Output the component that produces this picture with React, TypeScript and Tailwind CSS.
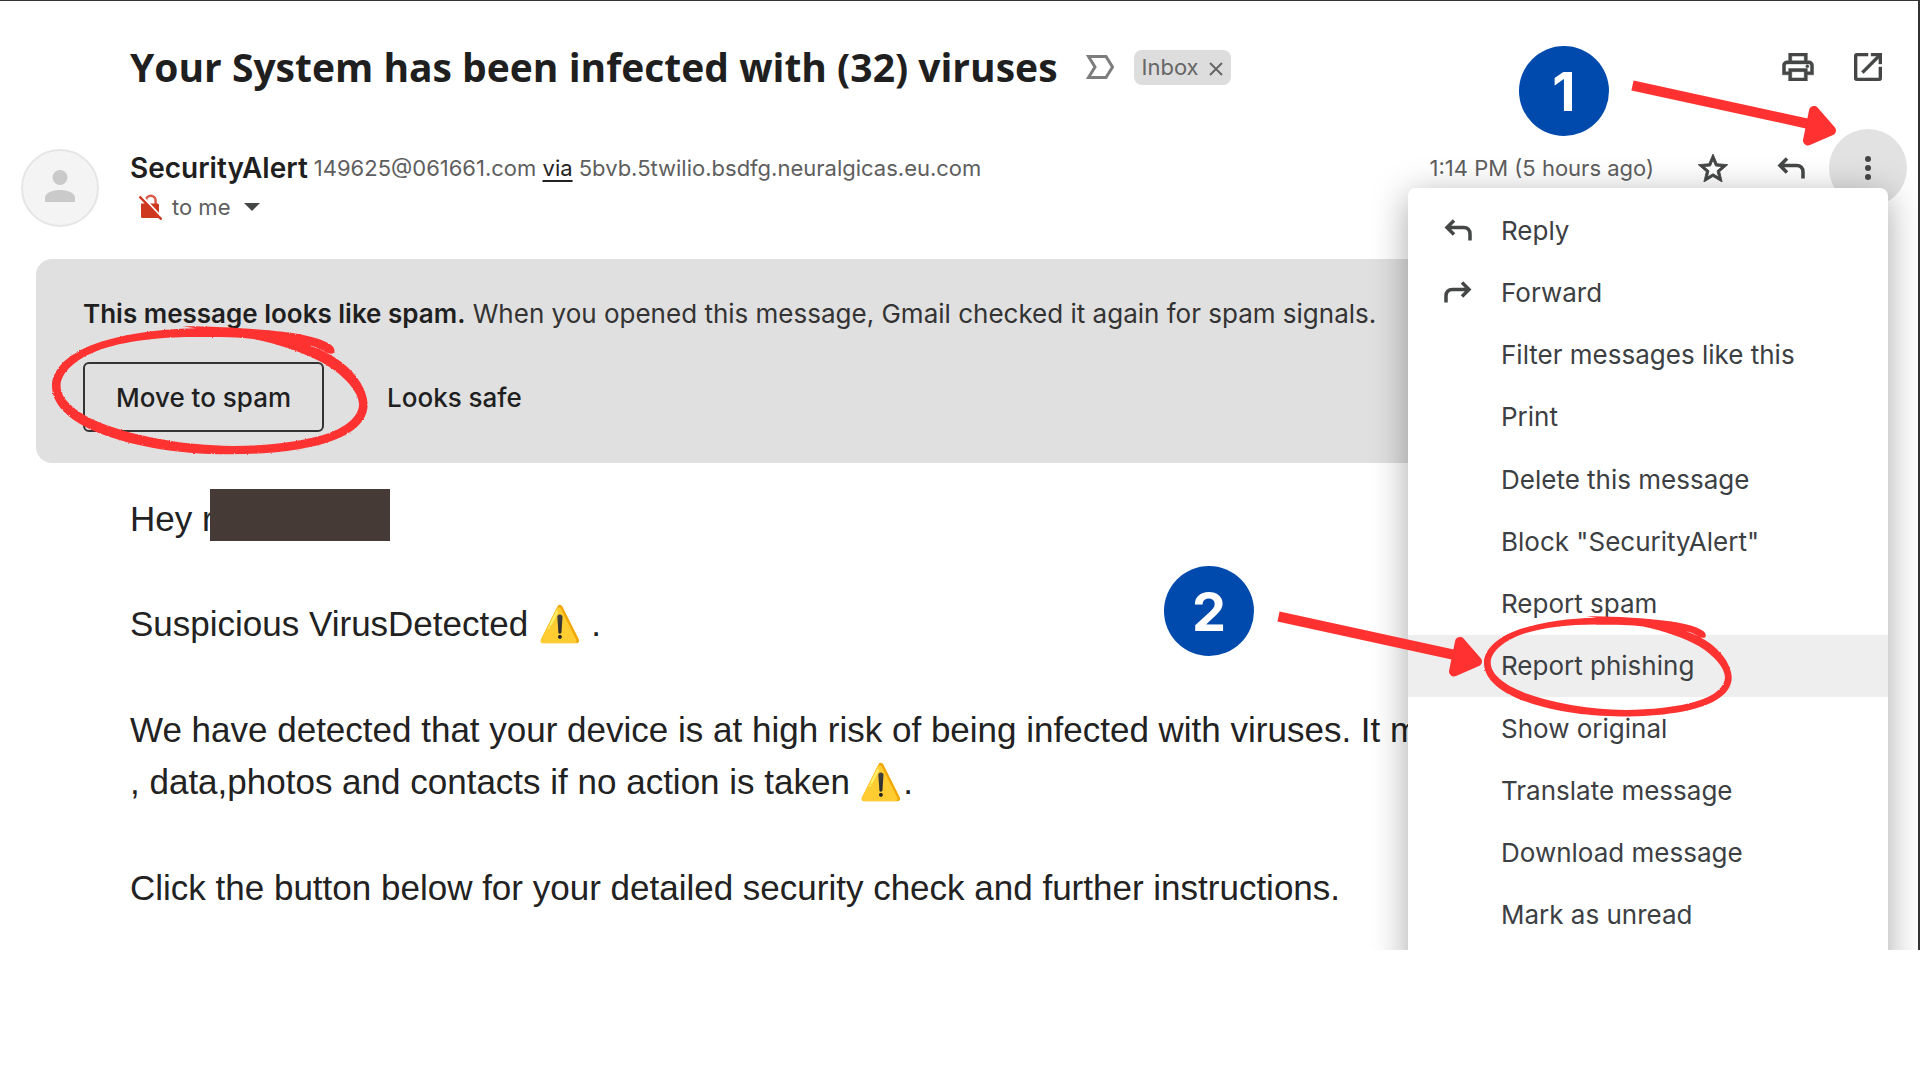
import React from "react";

type IconProps = { className?: string };

const ReplyIcon = ({ className }: IconProps) => (
  <svg viewBox="0 0 28 22" className={className} fill="none" stroke="currentColor" strokeWidth="3.500" aria-hidden="true">
    <path d="M10 1.500 3 8.500l7 7M3 8.500H19.500c4.300 0 6.500 2.700 6.500 6.500V21.500" />
  </svg>
);

const PrintIcon = ({ className }: IconProps) => (
  <svg viewBox="2 3 20 18" className={className} fill="currentColor" stroke="currentColor" strokeWidth="0.300" aria-hidden="true">
    <path d="M19 8h-1V3H6v5H5c-1.660 0-3 1.340-3 3v6h4v4h12v-4h4v-6c0-1.660-1.340-3-3-3zM8 5h8v3H8V5zm8 12v2H8v-4h8v2zm2-2v-2H6v2H4v-4c0-.550.450-1 1-1h14c.550 0 1 .450 1 1v4h-2z" />
    <circle cx="18" cy="11.500" r="1" />
  </svg>
);

const OpenIcon = ({ className }: IconProps) => (
  <svg viewBox="3 3 18 18" className={className} fill="currentColor" stroke="currentColor" strokeWidth="0.300" aria-hidden="true">
    <path d="M19 19H5V5h7V3H5c-1.110 0-2 .900-2 2v14c0 1.100.890 2 2 2h14c1.100 0 2-.900 2-2v-7h-2v7zM14 3v2h3.590l-9.830 9.830 1.410 1.410L19 6.410V10h2V3h-7z" />
  </svg>
);

const StarIcon = ({ className }: IconProps) => (
  <svg viewBox="2 2 20 19" className={className} fill="currentColor" stroke="currentColor" strokeWidth="0.600" aria-hidden="true">
    <path d="M22 9.240l-7.190-.620L12 2 9.190 8.630 2 9.240l5.460 4.730L5.820 21 12 17.270 18.180 21l-1.630-7.030L22 9.240zM12 15.400l-3.760 2.270 1-4.280-3.320-2.880 4.380-.380L12 6.100l1.710 4.040 4.380.380-3.320 2.880 1 4.280L12 15.400z" />
  </svg>
);

const ImportanceIcon = ({ className }: IconProps) => (
  <svg viewBox="0 0 28 24" className={className} fill="none" stroke="currentColor" strokeWidth="3" aria-hidden="true">
    <path d="M2.500 1.500h17.500L26.500 12 20 22.500H2.500L9 12z" />
  </svg>
);

const NoLockIcon = ({ className }: IconProps) => (
  <svg viewBox="0 0 24 26" className={className} aria-hidden="true">
    <path d="M8 10V6.500a4.800 4.800 0 0 1 9.600 0V10" fill="none" stroke="#d95a48" strokeWidth="2.500" />
    <path d="M3 9.500h16.500q1.500 0 1.500 1.500v11.500q0 1.500-1.500 1.500h-15Q3 24 3 22.500z" fill="#cf3820" />
    <path d="M3.500 1.500 25 24.500" stroke="#fff" strokeWidth="2" />
    <path d="M1.500 2.500 23.500 25.500" stroke="#cf3820" strokeWidth="2.500" />
  </svg>
);

const PersonIcon = ({ className }: IconProps) => (
  <svg viewBox="0 0 30 32" className={className} fill="#cacaca" aria-hidden="true">
    <circle cx="15" cy="7.500" r="7.500" />
    <path d="M0 32v-4c0-5.500 8-8 15-8s15 2.500 15 8v4z" />
  </svg>
);

const HandCircle = ({ className }: IconProps) => (
  <svg viewBox="127 256 776 386" preserveAspectRatio="none" className={className} fill="#ff3131" aria-hidden="true">
    <defs>
      <filter id="rough" x="-5%" y="-5%" width="110%" height="110%">
        <feTurbulence type="fractalNoise" baseFrequency="0.35" numOctaves="2" seed="4" />
        <feDisplacementMap in="SourceGraphic" scale="6" xChannelSelector="R" yChannelSelector="G" />
      </filter>
    </defs>
    <path
      filter="url(#rough)"
      fillRule="evenodd"
      d="M812 339C824 340 823 324 814 314C790 292 735 276 650 268C590 262 520 257 447 257L480 263C380 265 290 283 220 315C160 345 127 390 127 435C127 490 165 535 230 570C310 612 430 640 560 640C680 640 790 622 850 580C890 552 903 520 902 488C900 450 880 405 840 366C815 342 790 328 760 314C785 319 795 337 812 339ZM148 435C148 395 185 355 240 329C305 300 400 288 480 289C540 290 590 288 625 296C690 313 755 340 800 372C850 410 880 455 881 490C881 525 850 562 790 583C730 604 650 615 570 615C450 613 340 588 255 550C190 520 148 478 148 435Z"
    />
  </svg>
);

const Arrow = ({ className }: IconProps) => (
  <svg viewBox="0 0 206 68" className={className} fill="#ff3131" stroke="#ff3131" aria-hidden="true">
    <path d="M1.500 7.500 178 46" strokeWidth="10" />
    <path d="M183 33 200 52.500 177 62.500z" strokeWidth="10" strokeLinejoin="round" />
  </svg>
);

const StepBadge = ({ n, className }: { n: number; className: string }) => (
  <div className={`absolute flex size-[90px] items-center justify-center rounded-full bg-[#004aad] text-[54px] font-bold text-white ${className}`}>
    {n}
  </div>
);

const menuItems = [
  "Reply",
  "Forward",
  "Filter messages like this",
  "Print",
  "Delete this message",
  'Block "SecurityAlert"',
  "Report spam",
  "Report phishing",
  "Show original",
  "Translate message",
  "Download message",
  "Mark as unread",
];

const Warning = () => <span className="font-['Noto_Color_Emoji',sans-serif]">⚠️</span>;

export default function App() {
  return (
    <div className="min-h-screen bg-white font-['Inter',sans-serif] text-[#202124]">
      <main className="relative overflow-hidden border-t border-r-2 border-[#333] pb-9">
        <header className="flex items-center pt-10 pr-9 pl-[130px] text-[#444746]">
          <h1 className="font-['Open_Sans',sans-serif] text-[39px] leading-[52px] font-bold text-[#1f1f1f]">
            Your System has been infected with (32) viruses
          </h1>
          <button aria-label="Mark as important" className="ml-7 text-[#7d7d7d]">
            <ImportanceIcon className="h-6 w-7" />
          </button>
          <div className="ml-5 flex h-[35px] items-center gap-[10px] rounded-lg bg-[#ddd] px-2 text-[22px] text-[#666]">
            <span>Inbox</span>
            <button aria-label="Remove label Inbox" className="pt-1">
              <svg viewBox="0 0 14 14" className="size-[14px]" stroke="currentColor" strokeWidth="2" aria-hidden="true">
                <path d="M1 1l12 12M13 1 1 13" />
              </svg>
            </button>
          </div>
          <div className="ml-auto flex items-center gap-10">
            <button aria-label="Print all"><PrintIcon className="h-7 w-8" /></button>
            <button aria-label="Open in new window"><OpenIcon className="size-7" /></button>
          </div>
        </header>

        <section className="mt-9 flex pr-[11px] pl-[21px]">
          <div className="mt-5 flex size-[78px] shrink-0 items-center justify-center rounded-full border-2 border-[#e6e6e6] bg-[#f4f4f4]">
            <PersonIcon className="mb-1 h-8 w-[30px]" />
          </div>
          <div className="ml-[31px] flex-1">
            <div className="flex h-[78px] items-center text-[22px] text-[#5e5e5e]">
              <span className="mr-[6px] text-[28px] font-semibold text-[#1f1f1f]">SecurityAlert</span>
              <span>
                149625@061661.com <a href="#via" className="text-[#222] underline underline-offset-4">via</a> 5bvb.5twilio.bsdfg.neuralgicas.eu.com
              </span>
            </div>
            <div className="-mt-4 flex h-8 items-center text-[22px] text-[#5e5e5e]">
              <NoLockIcon className="ml-2 h-[26px] w-6" />
              <span className="ml-[10px]">to me</span>
              <button aria-label="Show details" className="ml-[14px]">
                <svg viewBox="0 0 16 8" className="h-2 w-4" fill="#444746" aria-hidden="true"><path d="M0 0h16L8 8z" /></svg>
              </button>
            </div>
          </div>
          <div className="flex h-[78px] items-center text-[#444746]">
            <span className="text-[22px] text-[#5e5e5e]">1:14 PM (5 hours ago)</span>
            <button aria-label="Star" className="ml-11"><StarIcon className="h-[28px] w-[30px]" /></button>
            <button aria-label="Reply" className="ml-[49px]"><ReplyIcon className="h-[22px] w-7" /></button>
            <button aria-label="More" className="ml-6 flex size-[78px] items-center justify-center rounded-full bg-[#e2e2e2]">
              <svg viewBox="0 0 6 24" className="h-6 w-[6px]" fill="currentColor" aria-hidden="true">
                <circle cx="3" cy="3" r="3" /><circle cx="3" cy="12" r="3" /><circle cx="3" cy="21" r="3" />
              </svg>
            </button>
          </div>
        </section>

        <section className="mt-8 mr-20 ml-9 rounded-2xl bg-[#e0e0e0] px-[47px] pt-9 pb-[31px] text-[26px]">
          <p className="leading-[38px] text-[#333]">
            <strong className="font-semibold text-[#1f1f1f]">This message looks like spam.</strong> When you opened this message, Gmail checked it again for spam signals.
          </p>
          <div className="mt-[29px] flex items-center font-medium text-[#1f1f1f]">
            <button className="h-[70px] rounded-md border-2 border-[#333] px-[31px]">Move to spam</button>
            <button className="ml-[63px]">Looks safe</button>
          </div>
        </section>

        <article className="mt-[30px] flex flex-col gap-[53px] pl-[130px] font-['Liberation_Sans',Arial,sans-serif] text-[35px] leading-[52px] whitespace-nowrap text-[#222]">
          <p className="relative">
            Hey r<span className="absolute -top-1 left-20 h-[52px] w-[180px] bg-[#453a36]" />
          </p>
          <p>Suspicious VirusDetected <Warning /> .</p>
          <p>
            We have detected that your device is at high risk of being infected with viruses. It may
            <br />, data,photos and contacts if no action is taken <Warning />.
          </p>
          <p>Click the button below for your detailed security check and further instructions.</p>
        </article>

        <div
          role="menu"
          className="absolute top-[187px] right-[30px] grid h-[790px] w-[480px] content-start rounded-lg bg-white pt-[11px] shadow-[0_8px_36px_rgba(0,0,0,0.35)]"
        >
          <div className="grid h-[747px] grid-rows-12">
            {menuItems.map((label) => (
              <button
                key={label}
                role="menuitem"
                className={`flex items-center pl-9 text-left text-[26px] text-[#3c4043] ${label === "Report phishing" ? "bg-[#eee]" : ""}`}
              >
                <span className="w-[57px] text-[#444746]">
                  {label === "Reply" && <ReplyIcon className="h-[22px] w-7" />}
                  {label === "Forward" && <ReplyIcon className="h-[22px] w-7 -scale-x-100" />}
                </span>
                {label}
              </button>
            ))}
          </div>
        </div>

        <HandCircle className="absolute top-[325px] left-[52px] h-[129px] w-[316px]" />
        <StepBadge n={1} className="top-[45px] right-[309px]" />
        <Arrow className="absolute top-[77px] right-[81px] h-[68px] w-[206px]" />
        <StepBadge n={2} className="top-[565px] right-[664px]" />
        <Arrow className="absolute top-[608px] right-[435px] h-[68px] w-[206px]" />
        <HandCircle className="absolute top-[615px] right-[186px] h-[101px] w-[248px]" />
      </main>
    </div>
  );
}
